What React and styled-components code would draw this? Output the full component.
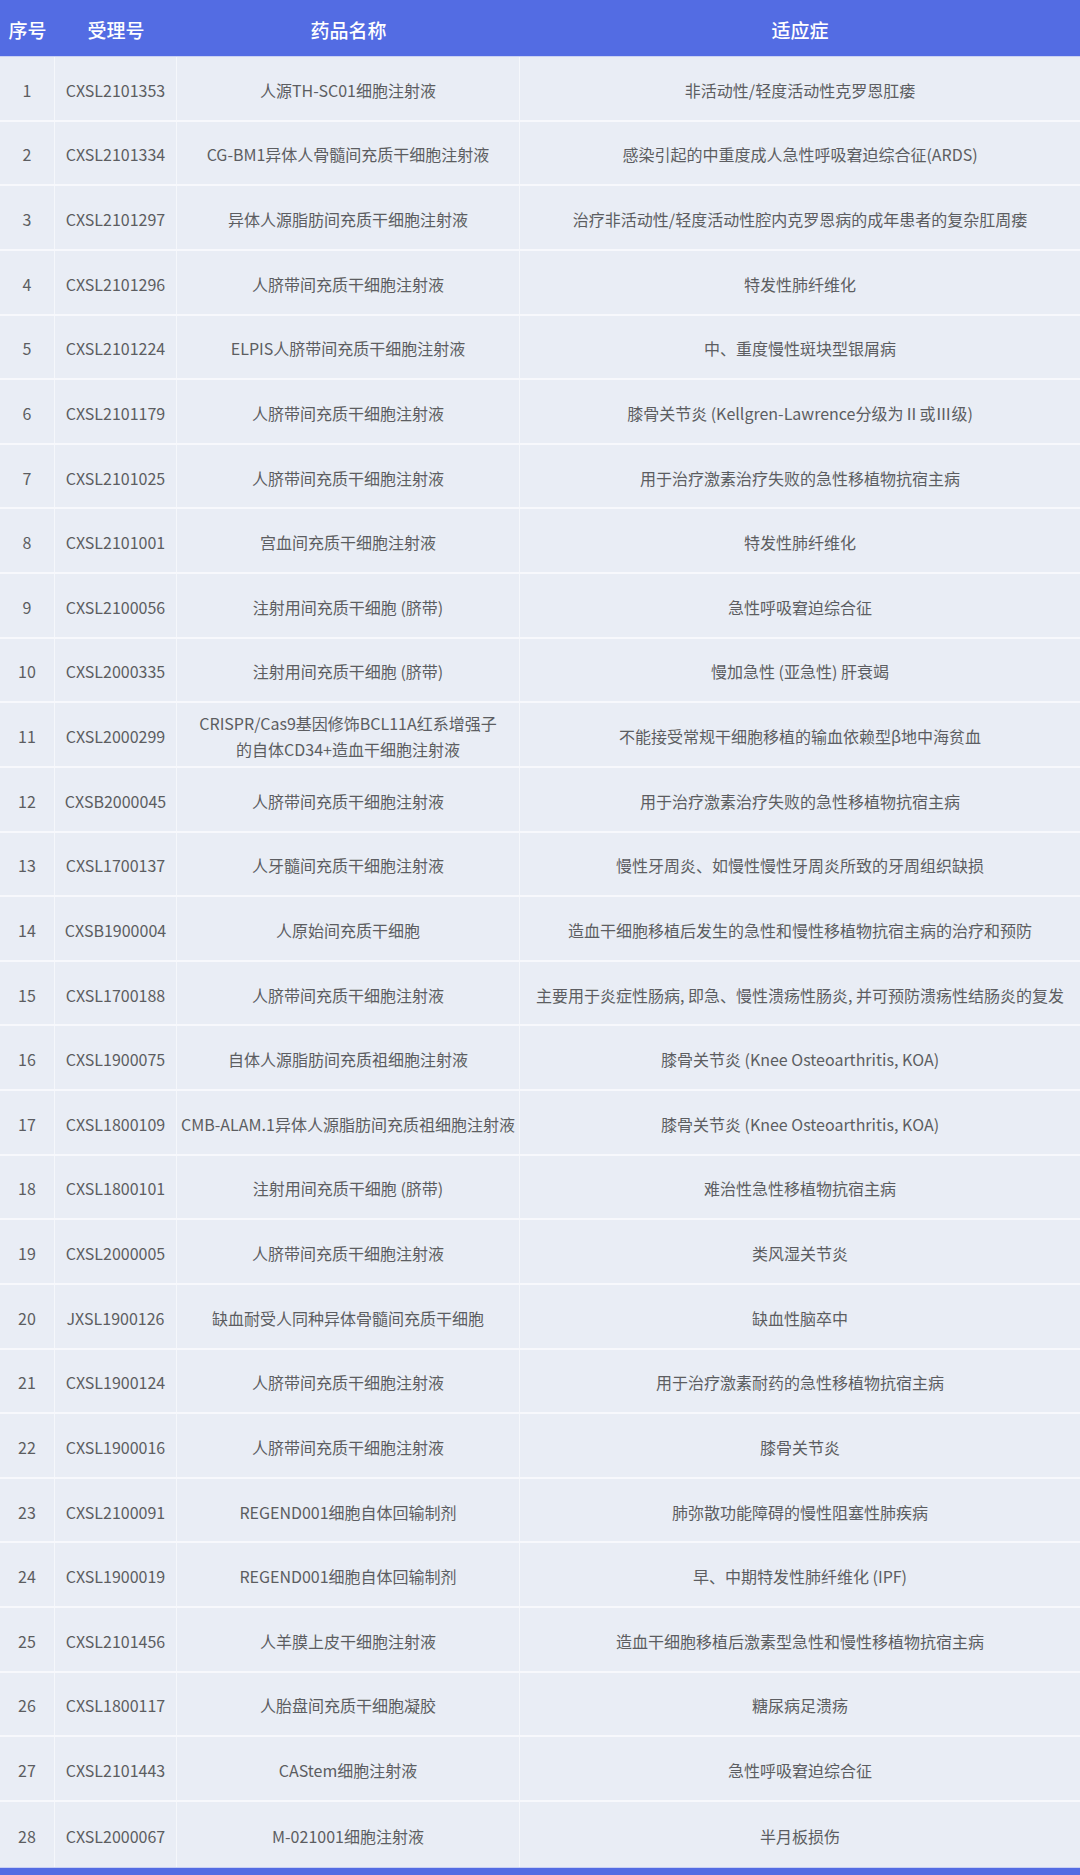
import React from "react";
import styled, { createGlobalStyle } from "styled-components";

const GlobalStyle = createGlobalStyle`
  html, body {
    margin: 0;
    padding: 0;
    background: #e9edf5;
  }
  body {
    font-family: "Noto Sans CJK SC", "Noto Sans", sans-serif;
  }
`

const Page = styled.div`
  width: 1080px;
  display: flex;
  flex-direction: column;
`

const HeaderRow = styled.div`
  display: grid;
  grid-template-columns: 55px 122px 343px 1fr;
  height: 56px;
  background-color: #536ce3;
  border-bottom: 1px solid #c9d1f3;
`

const HeadCell = styled.div`
  display: flex;
  align-items: center;
  justify-content: center;
  color: #ffffff;
  font-size: 19px;
  font-weight: 500;
  padding-top: 2px;
`

const Row = styled.div`
  display: grid;
  grid-template-columns: 55px 122px 343px 1fr;
  height: 64.64px;
  box-sizing: border-box;
  border-bottom: 2px solid #f7f8fc;
  background-color: #e9edf5;
  &:last-child {
    border-bottom: none;
  }
`

const Cell = styled.div`
  display: flex;
  align-items: center;
  justify-content: center;
  text-align: center;
  box-sizing: border-box;
  padding: 3px ${p => (p.$wide ? 8 : 4)}px 0;
  border-right: ${p => (p.$last ? "none" : "1.5px solid #f5f7fb")};
  color: #5c5d61;
  font-size: 16px;
  line-height: 26px;
  white-space: nowrap;
`

const FooterBar = styled.div`
  height: 9px;
  background-color: #536ce3;
  border-top: 1px solid #c9d1f3;
`

const rows = [
  ["CXSL2101353", "人源TH-SC01细胞注射液", "非活动性/轻度活动性克罗恩肛瘘"],
  ["CXSL2101334", "CG-BM1异体人骨髓间充质干细胞注射液", "感染引起的中重度成人急性呼吸窘迫综合征(ARDS)"],
  ["CXSL2101297", "异体人源脂肪间充质干细胞注射液", "治疗非活动性/轻度活动性腔内克罗恩病的成年患者的复杂肛周瘘"],
  ["CXSL2101296", "人脐带间充质干细胞注射液", "特发性肺纤维化"],
  ["CXSL2101224", "ELPIS人脐带间充质干细胞注射液", "中、重度慢性斑块型银屑病"],
  ["CXSL2101179", "人脐带间充质干细胞注射液", "膝骨关节炎 (Kellgren-Lawrence分级为Ⅱ或Ⅲ级)"],
  ["CXSL2101025", "人脐带间充质干细胞注射液", "用于治疗激素治疗失败的急性移植物抗宿主病"],
  ["CXSL2101001", "宫血间充质干细胞注射液", "特发性肺纤维化"],
  ["CXSL2100056", "注射用间充质干细胞 (脐带)", "急性呼吸窘迫综合征"],
  ["CXSL2000335", "注射用间充质干细胞 (脐带)", "慢加急性 (亚急性) 肝衰竭"],
  ["CXSL2000299", ["CRISPR/Cas9基因修饰BCL11A红系增强子", "的自体CD34+造血干细胞注射液"], "不能接受常规干细胞移植的输血依赖型β地中海贫血"],
  ["CXSB2000045", "人脐带间充质干细胞注射液", "用于治疗激素治疗失败的急性移植物抗宿主病"],
  ["CXSL1700137", "人牙髓间充质干细胞注射液", "慢性牙周炎、如慢性慢性牙周炎所致的牙周组织缺损"],
  ["CXSB1900004", "人原始间充质干细胞", "造血干细胞移植后发生的急性和慢性移植物抗宿主病的治疗和预防"],
  ["CXSL1700188", "人脐带间充质干细胞注射液", "主要用于炎症性肠病, 即急、慢性溃疡性肠炎, 并可预防溃疡性结肠炎的复发"],
  ["CXSL1900075", "自体人源脂肪间充质祖细胞注射液", "膝骨关节炎 (Knee Osteoarthritis, KOA)"],
  ["CXSL1800109", "CMB-ALAM.1异体人源脂肪间充质祖细胞注射液", "膝骨关节炎 (Knee Osteoarthritis, KOA)"],
  ["CXSL1800101", "注射用间充质干细胞 (脐带)", "难治性急性移植物抗宿主病"],
  ["CXSL2000005", "人脐带间充质干细胞注射液", "类风湿关节炎"],
  ["JXSL1900126", "缺血耐受人同种异体骨髓间充质干细胞", "缺血性脑卒中"],
  ["CXSL1900124", "人脐带间充质干细胞注射液", "用于治疗激素耐药的急性移植物抗宿主病"],
  ["CXSL1900016", "人脐带间充质干细胞注射液", "膝骨关节炎"],
  ["CXSL2100091", "REGEND001细胞自体回输制剂", "肺弥散功能障碍的慢性阻塞性肺疾病"],
  ["CXSL1900019", "REGEND001细胞自体回输制剂", "早、中期特发性肺纤维化 (IPF)"],
  ["CXSL2101456", "人羊膜上皮干细胞注射液", "造血干细胞移植后激素型急性和慢性移植物抗宿主病"],
  ["CXSL1800117", "人胎盘间充质干细胞凝胶", "糖尿病足溃疡"],
  ["CXSL2101443", "CAStem细胞注射液", "急性呼吸窘迫综合征"],
  ["CXSL2000067", "M-021001细胞注射液", "半月板损伤"],
];

export default function App() {
  return (
    <Page>
      <GlobalStyle />
      <HeaderRow>
        <HeadCell>序号</HeadCell>
        <HeadCell>受理号</HeadCell>
        <HeadCell>药品名称</HeadCell>
        <HeadCell>适应症</HeadCell>
      </HeaderRow>
      <div>
        {rows.map(([code, name, use], index) => (
          <Row key={code + index}>
            <Cell>{index + 1}</Cell>
            <Cell>{code}</Cell>
            <Cell $wide>
              {Array.isArray(name) ? (
                <span>{name[0]}<br />{name[1]}</span>
              ) : name}
            </Cell>
            <Cell $wide $last>{use}</Cell>
          </Row>
        ))}
      </div>
      <FooterBar />
    </Page>
  )
}
